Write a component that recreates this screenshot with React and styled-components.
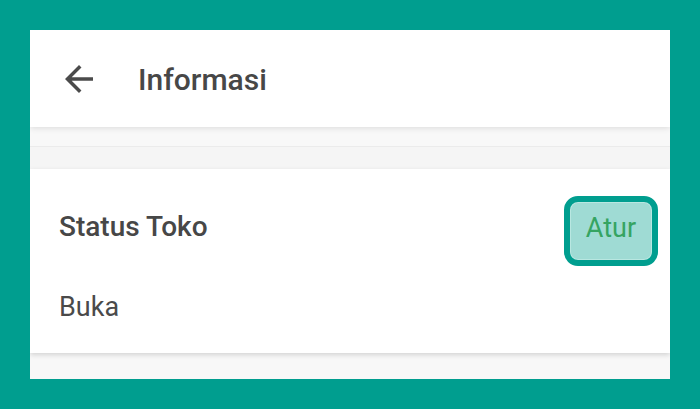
import styled, { createGlobalStyle } from "styled-components";

const GlobalStyle = createGlobalStyle`
  html, body {
    margin: 0;
    padding: 0;
    background: #009e8f;
    font-family: Roboto, "Noto Sans", "Liberation Sans", sans-serif;
  }
`;

const BackIcon = () => (
  <svg width="42" height="42" viewBox="0 0 24 24" fill="#4b4b4b">
    <path d="M20 11H7.83l5.59-5.59L12 4l-8 8 8 8 1.41-1.41L7.83 13H20v-2z" />
  </svg>
);

const App = () => {
  return (
    <>
      <GlobalStyle />
      <Frame>
        <Panel>
          <Header>
            <BackButton>
              <BackIcon />
            </BackButton>
            <Title>Informasi</Title>
          </Header>
          <Band />
          <Card>
            <Row>
              <Label>Status Toko</Label>
              <ActionButton>Atur</ActionButton>
            </Row>
            <Value>Buka</Value>
          </Card>
        </Panel>
      </Frame>
    </>
  );
};

export default App;

const Frame = styled.div`
  box-sizing: border-box;
  width: 700px;
  height: 409px;
  padding: 30px;
  background: #009e8f;
`;

const Panel = styled.div`
  display: flex;
  flex-direction: column;
  height: 100%;
  background: #f8f8f8;
  overflow: hidden;
`;

const Header = styled.div`
  position: relative;
  z-index: 2;
  display: flex;
  align-items: center;
  flex-shrink: 0;
  height: 97px;
  padding-left: 16px;
  background: #ffffff;
  box-shadow: 0 1px 6px rgba(0, 0, 0, 0.12);
`;

const BackButton = styled.div`
  display: flex;
  align-items: center;
  justify-content: center;
  width: 42px;
  height: 42px;
  margin-left: 12px;
`;

const Title = styled.h1`
  margin: 0 0 0 38px;
  padding-top: 2px;
  font-size: 30px;
  line-height: 30px;
  font-weight: 500;
  color: #474747;
`;

const Band = styled.div`
  flex-shrink: 0;
  height: 22px;
  margin-top: 19px;
  background: #f5f5f5;
  border-top: 1px solid #ebebeb;
`;

const Card = styled.div`
  position: relative;
  z-index: 1;
  display: flex;
  flex-direction: column;
  flex-shrink: 0;
  padding: 27px 12px 32px 29px;
  background: #ffffff;
  box-shadow: 0 2px 5px rgba(0, 0, 0, 0.15);
`;

const Row = styled.div`
  display: flex;
  align-items: flex-start;
  justify-content: space-between;
  height: 70px;
`;

const Label = styled.div`
  margin-top: 17px;
  font-size: 28px;
  line-height: 28px;
  font-weight: 500;
  color: #474747;
`;

const ActionButton = styled.button`
  box-sizing: border-box;
  width: 94px;
  height: 70px;
  padding: 0 0 6px;
  border: 6px solid #009e8f;
  border-radius: 14px;
  background: #9fdbd4;
  box-shadow: inset 0 0 0 1px #b9e7e1;
  font-family: Roboto, "Noto Sans", sans-serif;
  font-size: 27px;
  font-weight: 400;
  color: #35a462;
`;

const Value = styled.div`
  margin-top: 28px;
  font-size: 27px;
  line-height: 27px;
  font-weight: 400;
  color: #4a4a4a;
`;
